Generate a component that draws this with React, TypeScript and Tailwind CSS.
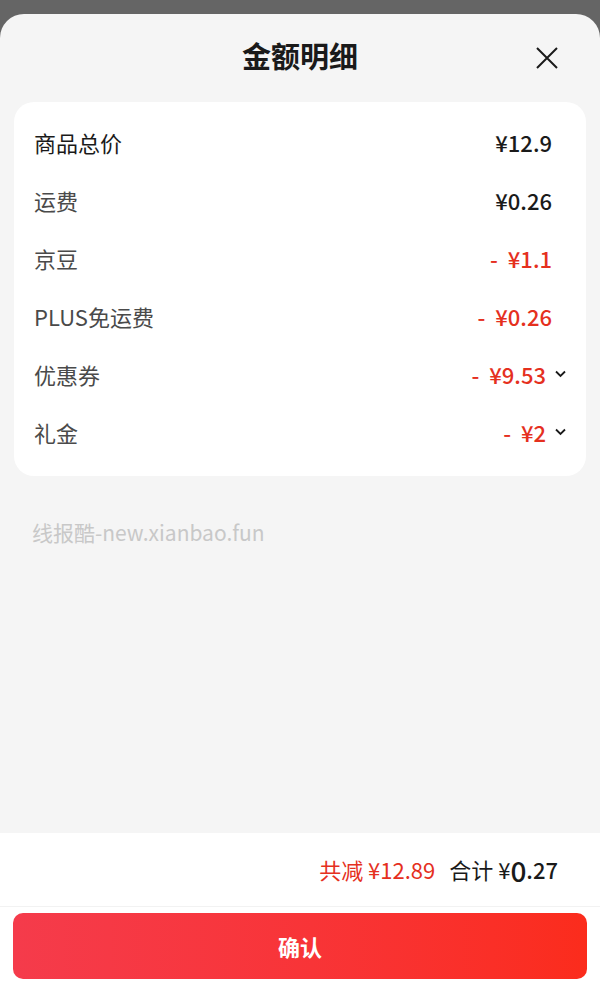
const rows = [
  { label: "商品总价", value: "¥12.9", red: false, strong: true, more: false },
  { label: "运费", value: "¥0.26", red: false, strong: false, more: false },
  { label: "京豆", value: "- ¥1.1", red: true, strong: false, more: false },
  { label: "PLUS免运费", value: "- ¥0.26", red: true, strong: false, more: false },
  { label: "优惠券", value: "- ¥9.53", red: true, strong: false, more: true },
  { label: "礼金", value: "- ¥2", red: true, strong: false, more: true },
];

const Chevron = () => (
  <svg width="11" height="8" viewBox="0 0 11 8" className="ml-[9px]">
    <path d="M1 1.5 L5.5 6 L10 1.5" fill="none" stroke="#1a1a1a" strokeWidth="1.8" />
  </svg>
);

export default function App() {
  return (
    <div
      className="h-[993px] w-[600px] bg-[#656565] flex flex-col overflow-hidden"
      style={{ fontFamily: '"Noto Sans CJK SC", "Noto Sans", sans-serif' }}
    >
      <div className="h-[14px] shrink-0" />
      <div className="flex-1 bg-[#f5f5f5] rounded-t-[24px] flex flex-col">
        <div className="h-[88px] pb-[4px] flex items-center justify-center relative">
          <h1 className="text-[29px] font-bold text-[#1a1a1a]">金额明细</h1>
          <svg
            width="24"
            height="24"
            viewBox="0 0 24 24"
            className="absolute right-[41px] top-[32px]"
          >
            <path d="M2 2 L22 22 M22 2 L2 22" stroke="#1a1a1a" strokeWidth="2" />
          </svg>
        </div>

        <div className="mx-[14px] bg-white rounded-[20px] pt-[11px] pb-[15px]">
          {rows.map((r) => (
            <div key={r.label} className="h-[58px] flex items-center pl-[20px] pr-[20px]">
              <span
                className={`text-[22px] flex-1 ${r.strong ? "text-[#1a1a1a]" : "text-[#4a4a4a]"}`}
              >
                {r.label}
              </span>
              <span
                className={`text-[22px] font-medium flex items-center ${
                  r.red ? "text-[#e5301e]" : "text-[#1a1a1a]"
                } ${r.more ? "" : "mr-[14px]"}`}
              >
                <span className="whitespace-pre">{r.value.replace("- ", "-  ")}</span>
                {r.more && <Chevron />}
              </span>
            </div>
          ))}
        </div>

        <div className="mt-[41px] pl-[32px] text-[21px] text-[#c8c8c8]">
          线报酷-new.xianbao.fun
        </div>
      </div>

      <div className="bg-white shrink-0">
        <div className="h-[74px] flex items-center justify-end pr-[42px] border-b border-[#f2f2f2]">
          <span className="text-[22px] text-[#e5301e]">共减 ¥12.89</span>
          <span className="text-[22px] text-[#1a1a1a] ml-[14px]">合计 ¥</span>
          <span className="text-[28px] text-[#1a1a1a] font-medium leading-none">0</span>
          <span className="text-[22px] text-[#1a1a1a] font-medium">.27</span>
        </div>
        <div className="px-[13px] pt-[6px] pb-[14px]">
          <button className="w-full h-[66px] rounded-[10px] bg-gradient-to-r from-[#f53b4b] to-[#fb2c1c] text-white text-[22px] font-bold">
            确认
          </button>
        </div>
      </div>
    </div>
  );
}
